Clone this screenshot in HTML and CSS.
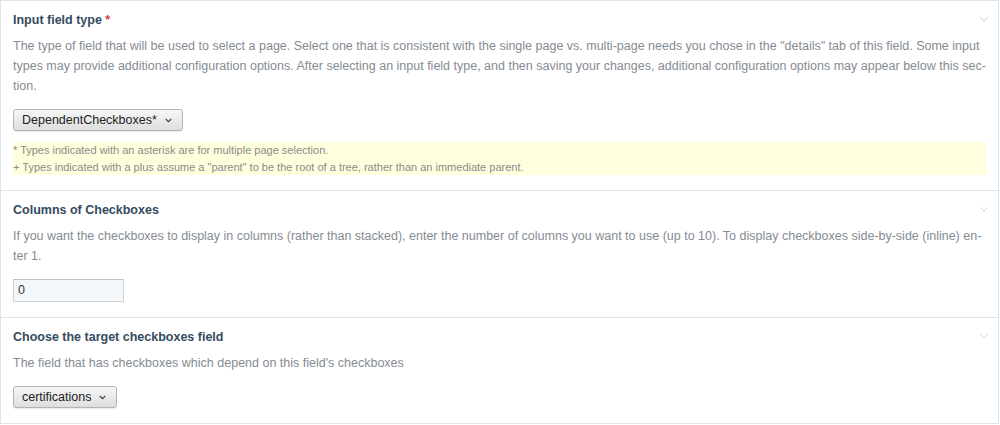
FILE: index.html
```html
<!DOCTYPE html>
<html lang="en">
<head>
<meta charset="utf-8">
<title>Field settings</title>
<link rel="stylesheet" href="styles.css">
</head>
<body>
<div class="fields">
  <section class="field">
    <div class="field-header">
      <h3 class="field-label">Input field type <span class="required">*</span></h3>
      <svg class="toggle" width="8" height="5" viewBox="0 0 8 5"><path d="M0.5 0.5 L4 4 L7.5 0.5" fill="none" stroke="#ccd3d8" stroke-width="1"/></svg>
    </div>
    <div class="field-content">
      <p class="desc">The type of field that will be used to select a page. Select one that is consistent with the single page vs. multi-page needs you chose in the "details" tab of this field. Some input types may provide additional configuration options. After selecting an input field type, and then saving your changes, additional configuration options may appear below this sec&shy;tion.</p>
      <div class="control">
        <button class="select" type="button"><span>DependentCheckboxes*</span><svg width="7" height="5" viewBox="0 0 7 5"><path d="M0.8 1 L3.5 3.7 L6.2 1" fill="none" stroke="#444" stroke-width="1.2"/></svg></button>
      </div>
      <div class="notes">
        <div>* Types indicated with an asterisk are for multiple page selection.</div>
        <div>+ Types indicated with a plus assume a "parent" to be the root of a tree, rather than an immediate parent.</div>
      </div>
    </div>
  </section>
  <section class="field">
    <div class="field-header">
      <h3 class="field-label">Columns of Checkboxes</h3>
      <svg class="toggle" width="8" height="5" viewBox="0 0 8 5"><path d="M0.5 0.5 L4 4 L7.5 0.5" fill="none" stroke="#ccd3d8" stroke-width="1"/></svg>
    </div>
    <div class="field-content">
      <p class="desc">If you want the checkboxes to display in columns (rather than stacked), enter the number of columns you want to use (up to 10). To display checkboxes side-by-side (inline) en&shy;ter 1.</p>
      <div class="control">
        <div class="text-input">0</div>
      </div>
    </div>
  </section>
  <section class="field">
    <div class="field-header">
      <h3 class="field-label">Choose the target checkboxes field</h3>
      <svg class="toggle" width="8" height="5" viewBox="0 0 8 5"><path d="M0.5 0.5 L4 4 L7.5 0.5" fill="none" stroke="#ccd3d8" stroke-width="1"/></svg>
    </div>
    <div class="field-content">
      <p class="desc">The field that has checkboxes which depend on this field's checkboxes</p>
      <div class="control">
        <button class="select" type="button"><span>certifications</span><svg width="7" height="5" viewBox="0 0 7 5"><path d="M0.8 1 L3.5 3.7 L6.2 1" fill="none" stroke="#444" stroke-width="1.2"/></svg></button>
      </div>
    </div>
  </section>
</div>
</body>
</html>
```

FILE: styles.css
```css
* { box-sizing: border-box; }
html, body { margin: 0; padding: 0; background: #fff; }
body {
  font-family: "Liberation Sans", Arial, sans-serif;
  font-size: 12.5px;
  color: #333;
}
.fields {
  width: 999px;
  border: 1px solid #dde4e8;
  border-top: 0;
}
.field {
  border-top: 1px solid #dde4e8;
  padding: 10px 12px 15px 12px;
}
.field-header {
  display: flex;
  justify-content: space-between;
  align-items: center;
  height: 18px;
}
.field-label {
  margin: 0;
  font-size: 12.5px;
  line-height: 18px;
  font-weight: bold;
  color: #354b60;
}
.required { color: #e03c3c; }
.toggle { margin-right: -2px; margin-top: -1px; }
.field-content { padding-top: 7px; }
.desc {
  margin: 0;
  line-height: 20px;
  color: #858b93;
  hyphens: manual;
}
.control { margin-top: 13px; display: flex; }
.select {
  display: flex;
  align-items: center;
  gap: 8px;
  height: 22px;
  padding: 0 10px 0 8px;
  font-family: inherit;
  font-size: 12.5px;
  color: #222;
  border: 1px solid #b4b4b4;
  border-radius: 3px;
  background: linear-gradient(#f7f7f7, #dedede);
  box-shadow: 0 1px 1px rgba(0,0,0,0.08);
}
.text-input {
  width: 111px;
  height: 23px;
  padding: 0 4px;
  line-height: 21px;
  background: #f4f7f9;
  border: 1px solid #cfd3d6;
  border-top-color: #bfc3c6;
  color: #333;
}
.notes {
  margin-top: 11px;
  background: #ffffdd;
  font-size: 11px;
  line-height: 16.5px;
  color: #8b8b8b;
}
```
